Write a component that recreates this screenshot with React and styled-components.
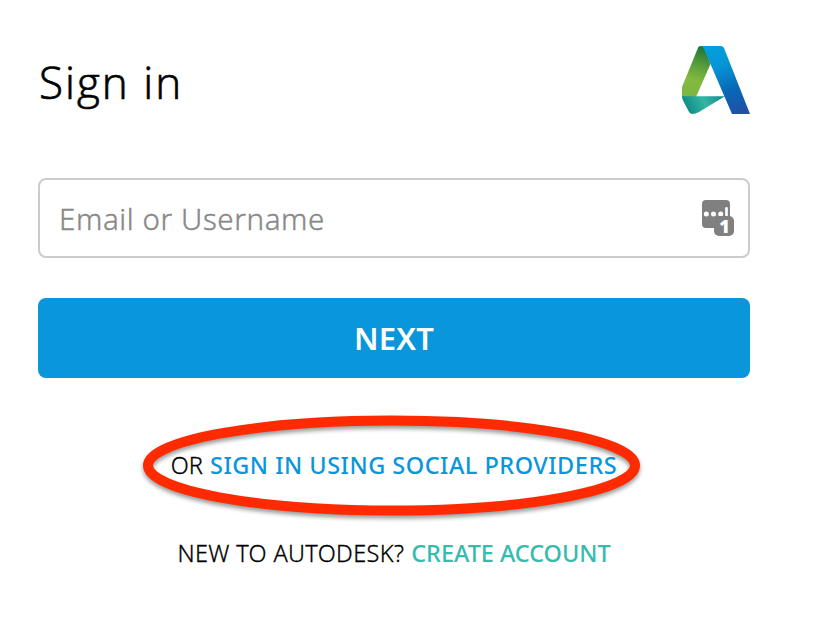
import React from "react";
import styled, { createGlobalStyle } from "styled-components";

const GlobalStyle = createGlobalStyle`
  * { box-sizing: border-box; }
  body { margin: 0; background: #fff; font-family: "Noto Sans", "Open Sans", sans-serif; color: #000; }
`;

const Page = styled.main`
  width: 814px;
  height: 644px;
  padding: 38px 64px 0 38px;
  display: flex;
  flex-direction: column;
  overflow: hidden;
`;

const Header = styled.header`
  height: 84px;
  display: flex;
  align-items: center;
  justify-content: space-between;
`;

const Title = styled.h1`
  margin: 3px 0 0 1px;
  font-family: "Open Sans", sans-serif;
  font-size: 44px;
  line-height: 60px;
  font-weight: 300;
  letter-spacing: 2px;
  -webkit-text-stroke: 0.7px #000;
`;

const Field = styled.div`
  width: 712px;
  height: 80px;
  margin-top: 56px;
  padding: 0 14px 0 19px;
  display: flex;
  align-items: center;
  border: 2px solid #ccc;
  border-radius: 8px;
`;

const Input = styled.input`
  flex: 1;
  min-width: 0;
  height: 60px;
  padding: 0;
  border: 0;
  outline: 0;
  background: transparent;
  font: 300 29.5px "Noto Sans", sans-serif;
  letter-spacing: 0.6px;
  &::placeholder { color: #888; opacity: 1; -webkit-text-stroke: 0.4px #888; }
`;

const Submit = styled.button`
  width: 712px;
  height: 80px;
  margin-top: 40px;
  padding: 0;
  border: 0;
  border-radius: 8px;
  background: #0a96db;
  color: #fff;
  font: 600 31px "Noto Sans", sans-serif;
  letter-spacing: 0.2px;
`;

const Prompt = styled.p`
  position: relative;
  width: 712px;
  height: 40px;
  margin: ${(p) => p.$gap}px 0 0;
  display: flex;
  align-items: center;
  justify-content: center;
  gap: 7px;
  white-space: nowrap;
  font-size: 23.5px;
`;

const Lead = styled.span`
  font-weight: 300;
  letter-spacing: ${(p) => p.$spacing}px;
  -webkit-text-stroke: 0.3px #000;
`;

const Action = styled.a`
  color: ${(p) => p.$color};
  font-weight: 550;
  letter-spacing: ${(p) => p.$spacing}px;
`;

const Ring = styled.svg`
  position: absolute;
  left: 98px;
  top: -35px;
  overflow: visible;
  pointer-events: none;
  filter: drop-shadow(0 3px 2px rgba(0, 0, 0, 0.4));
`;

const Logo = () => (
  <svg width="68" height="68" viewBox="0 0 68 68" aria-label="Autodesk">
    <defs>
      <linearGradient id="leftLeg" x1="22" y1="0" x2="4" y2="51" gradientUnits="userSpaceOnUse">
        <stop offset="0" stopColor="#1a7038" />
        <stop offset=".35" stopColor="#559c3b" />
        <stop offset=".65" stopColor="#83b93f" />
        <stop offset="1" stopColor="#79b642" />
      </linearGradient>
      <linearGradient id="rightLeg" x1="30" y1="0" x2="58" y2="68" gradientUnits="userSpaceOnUse">
        <stop offset="0" stopColor="#05a0dd" />
        <stop offset=".3" stopColor="#0694d5" />
        <stop offset=".65" stopColor="#0868b5" />
        <stop offset="1" stopColor="#2150a4" />
      </linearGradient>
      <linearGradient id="foot" x1="3" y1="65" x2="38" y2="48" gradientUnits="userSpaceOnUse">
        <stop offset="0" stopColor="#0b8783" />
        <stop offset=".55" stopColor="#35b6a5" />
        <stop offset="1" stopColor="#168f8d" />
      </linearGradient>
    </defs>
    <path d="M18 0H22L28.5 18L14 51H0V41L15.5 3Q16.3 0 18 0Z" fill="url(#leftLeg)" />
    <path d="M0 50.3H43L17 66Q13.5 68 10 68Q7.5 67.7 6.5 65L.8 54Q0 52.5 0 50.3Z" fill="url(#foot)" />
    <path d="M18 0H39Q41 0 42 2L68 68H50L22 3Q20.5 0 18 0Z" fill="url(#rightLeg)" />
  </svg>
);

const PasswordIcon = () => (
  <svg width="32" height="36" viewBox="0 0 32 36" overflow="visible" aria-label="One saved login">
    <rect width="28" height="28" rx="4" fill="#808080" />
    <circle cx="4.3" cy="14" r="2.5" fill="#fff" />
    <circle cx="11.5" cy="14" r="2.5" fill="#fff" />
    <circle cx="18.7" cy="14" r="2.5" fill="#fff" />
    <rect x="23.2" y="7" width="2.6" height="10" rx="1.3" fill="#fff" />
    <rect x="12" y="16" width="20" height="20" rx="5" fill="#808080" />
    <text x="22.5" y="33" textAnchor="middle" fill="#fff" fontFamily="Open Sans" fontSize="18" fontWeight="800">1</text>
  </svg>
);

export default function App() {
  return (
    <>
      <GlobalStyle />
      <Page>
        <Header>
          <Title>Sign in</Title>
          <Logo />
        </Header>
        <Field>
          <Input placeholder="Email or Username" aria-label="Email or Username" />
          <PasswordIcon />
        </Field>
        <Submit>NEXT</Submit>
        <Prompt $gap={67}>
          <Lead $spacing={0}>OR</Lead>
          <Action $color="#0a96db" $spacing={0.5}>SIGN IN USING SOCIAL PROVIDERS</Action>
          <Ring width="512" height="110" viewBox="0 0 512 110">
            <ellipse cx="255.5" cy="55.5" rx="243.5" ry="45" fill="none" stroke="#ff2a00" strokeWidth="10" />
          </Ring>
        </Prompt>
        <Prompt $gap={48}>
          <Lead $spacing={0.35}>NEW TO AUTODESK?</Lead>
          <Action $color="#35bcaf" $spacing={-0.05}>CREATE ACCOUNT</Action>
        </Prompt>
      </Page>
    </>
  );
}
